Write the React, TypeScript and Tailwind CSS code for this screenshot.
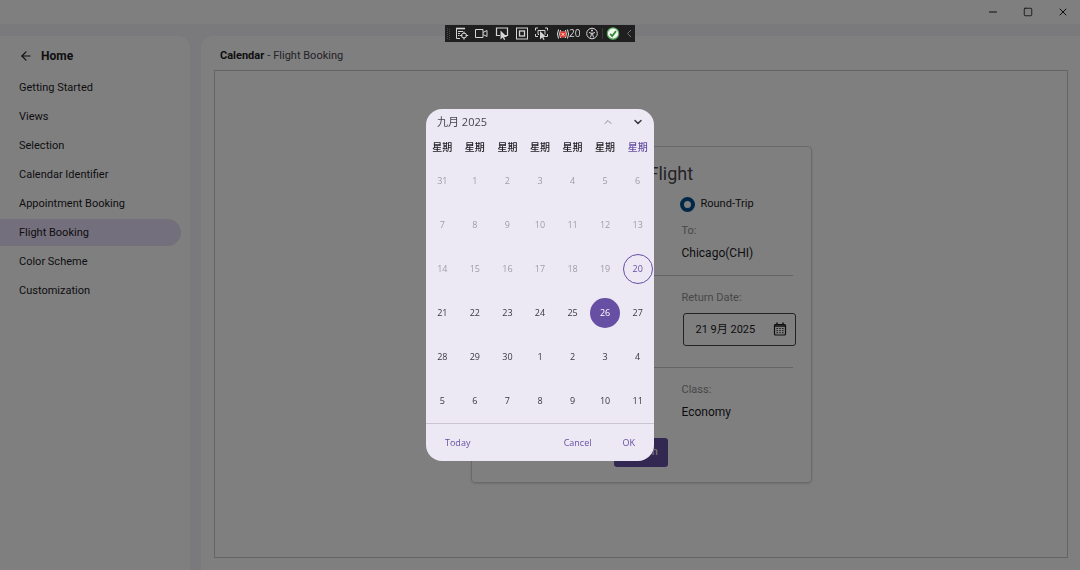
import React, { useState } from "react";
import { ArrowLeft, ChevronDown, ChevronUp, Minus, Square, X } from "lucide-react";

const MENU = [
  "Getting Started",
  "Views",
  "Selection",
  "Calendar Identifier",
  "Appointment Booking",
  "Flight Booking",
  "Color Scheme",
  "Customization",
];

const WEEKDAYS = ["星期", "星期", "星期", "星期", "星期", "星期", "星期"];

const WEEKS = [
  [31, 1, 2, 3, 4, 5, 6],
  [7, 8, 9, 10, 11, 12, 13],
  [14, 15, 16, 17, 18, 19, 20],
  [21, 22, 23, 24, 25, 26, 27],
  [28, 29, 30, 1, 2, 3, 4],
  [5, 6, 7, 8, 9, 10, 11],
];

// cell index of today, counted from the top left of the month grid
const TODAY = 20;

const TitleBar: React.FC = () => (
  <header className="flex h-6 shrink-0 items-center justify-end bg-white text-[#1c1b1f]">
    <button aria-label="Minimize" className="flex w-[35px] justify-center">
      <Minus className="h-3 w-3" strokeWidth={2} />
    </button>
    <button aria-label="Maximize" className="flex w-[35px] justify-center">
      <Square className="h-[10px] w-[10px]" strokeWidth={2} />
    </button>
    <button aria-label="Close" className="flex w-[35px] justify-center">
      <X className="h-3 w-3" strokeWidth={2} />
    </button>
  </header>
);

const Sidebar: React.FC = () => (
  <nav className="w-[190px] shrink-0 rounded-tr-xl bg-white pr-[9px]">
    <div className="flex h-[38px] items-center gap-2 pl-[19px] pt-[2px] text-[#1c1b1f]">
      <button aria-label="Back">
        <ArrowLeft className="h-[14px] w-[14px]" strokeWidth={2} />
      </button>
      <span className="text-[12px] font-bold">Home</span>
    </div>
    <ul className="flex flex-col gap-[2px]">
      {MENU.map((item) => (
        <li key={item}>
          <a
            href="#"
            className={`flex h-[27px] items-center rounded-r-full pl-[19px] pt-[2px] text-[11px] text-[#1c1b1f] ${
              item === "Flight Booking" ? "bg-[#e8def8]" : ""
            }`}
          >
            {item}
          </a>
        </li>
      ))}
    </ul>
  </nav>
);

const CalendarGlyph: React.FC = () => (
  <svg viewBox="0 0 14 14" className="h-[14px] w-[14px]" fill="none" stroke="currentColor">
    <rect x="1.5" y="2.5" width="11" height="10.5" rx="1" strokeWidth="1.2" />
    <path d="M4 .5v2M10 .5v2M1.5 4h11" strokeWidth="1.4" />
    <path
      d="M3.500 6.500h1.400M6.300 6.500h1.400M9.100 6.500h1.400M3.500 8.600h1.400M6.300 8.600h1.400M9.100 8.600h1.400M3.500 10.700h1.400M6.300 10.700h1.400M9.100 10.700h1.400"
      strokeWidth="1"
    />
  </svg>
);

const FlightCard: React.FC = () => (
  <form className="flex w-[341px] flex-col rounded-[4px] border border-[#d6d3d8] px-[15px] pb-[15px] shadow-sm">
    <h2 className="mt-[13px] text-center text-[18px] leading-[28px] text-[#49454f]">Book a Flight</h2>
    <div className="ml-auto mt-[8px] flex w-[114px] flex-col">
      <label className="ml-[-2px] flex h-[18px] items-center gap-[6px] text-[11px] text-[#1c1b1f]">
        <input
          type="radio"
          name="trip"
          defaultChecked
          className="h-[15px] w-[15px] appearance-none rounded-full border-4 border-[#004f8c]"
        />
        Round-Trip
      </label>
      <span className="mt-[8px] text-[11px] leading-[18px] text-[#8f8f8f]">To:</span>
      <span className="mt-[4px] text-[12px] leading-[18px] text-[#1c1b1f]">Chicago(CHI)</span>
    </div>
    <hr className="mx-[3px] mt-[13px] border-[#cac4d0]" />
    <div className="ml-auto mt-[13px] flex w-[114px] flex-col">
      <label htmlFor="return" className="text-[11px] leading-[18px] text-[#8f8f8f]">
        Return Date:
      </label>
      <div className="ml-px mt-[6px] flex h-[33px] items-center rounded-[3px] border border-[#49454f] pl-3 pr-2">
        <input
          id="return"
          readOnly
          value="21 9月 2025"
          className="min-w-0 flex-1 bg-transparent pt-[3px] text-[11px] text-[#1c1b1f] outline-none"
        />
        <button type="button" aria-label="Open calendar" className="text-[#1c1b1f]">
          <CalendarGlyph />
        </button>
      </div>
    </div>
    <hr className="mx-[3px] mt-[21px] border-[#cac4d0]" />
    <div className="ml-auto mt-[13px] flex w-[114px] flex-col">
      <span className="text-[11px] leading-[18px] text-[#8f8f8f]">Class:</span>
      <span className="mt-[4px] text-[12px] leading-[18px] text-[#1c1b1f]">Economy</span>
    </div>
    <button
      type="button"
      className="mx-auto mt-[17px] h-[29px] w-[54px] rounded-[3px] bg-[#6750a4] text-[11px] text-white"
    >
      Search
    </button>
  </form>
);

const DebugBar: React.FC = () => (
  <div className="fixed inset-x-0 top-[25px] flex justify-center">
    <div className="flex h-[17px] w-[190px] items-center bg-[#1f1f1f] text-[#d4d4d4]">
      <svg viewBox="0 0 112 17" className="h-[17px] w-[112px] shrink-0" fill="none" stroke="currentColor">
        {/* grip */}
        <path d="M2.5 3v12M4.5 4v12" stroke="#4a4a4a" strokeDasharray="1 1" />
        {/* live visual tree */}
        <path d="M11 3.500h9" strokeWidth="1.600" />
        <path d="M11.500 3.500v10h3.500M13 6.500h5M13 8.500h2M13 10.500h1.500" />
        <circle cx="19" cy="10.500" r="2.500" />
        <path d="M19 6.500v2.500M19 12v2.700M15 10.500h2.500M20.500 10.500h2.700" />
        {/* camera */}
        <path d="M30.500 4.500h7.500v8h-7.500zM38 7.500l4-2v6l-4-2" />
        {/* select element */}
        <path d="M55 10.500h-3.500v-7.500h11v7.500h-2.500" strokeWidth="1.200" />
        <path d="M55.500 5.500v9l2.200-2 1.300 2.500 1.300-.6-1.200-2.500h3z" fill="currentColor" stroke="none" />
        {/* layout adorners */}
        <rect x="71.500" y="3" width="11" height="11" />
        <rect x="74.500" y="6" width="5" height="5" strokeWidth="1.300" />
        {/* track focused */}
        <path d="M90.500 5.500v-2.500h2.500M100 3h2.500v2.500M90.500 9v2.500h2.500M102.500 9v2.500h-2M94 9.500h-1v-4h7v4" />
        <path d="M95 6v8.500l2.200-2 1.200 2.500 1.200-.6-1.200-2.500h2.800z" fill="currentColor" stroke="none" />
      </svg>
      <svg viewBox="0 0 12 12" className="h-3 w-3 shrink-0" fill="none" stroke="#e6e6e6" strokeWidth="1">
        <path d="M1.500 1.500Q-.5 6 1.500 10.500M3.500 2Q1.800 6 3.500 10M10.500 1.500Q12.500 6 10.500 10.500M8.500 2Q10.200 6 8.500 10" />
        <rect x="3.300" y="3.500" width="5.400" height="5.800" rx="1.500" fill="#e5352c" stroke="#f26a61" strokeWidth=".6" />
        <path d="M4.600 5l2.800 2.800M7.400 5L4.600 7.800" stroke="#fff" strokeWidth=".8" />
      </svg>
      <span className="w-[17px] shrink-0 font-['Open_Sans','Noto_Sans',sans-serif] text-[10px] leading-[17px]">20</span>
      <svg viewBox="0 0 49 17" className="h-[17px] w-[49px] shrink-0" fill="none" stroke="currentColor">
        {/* accessibility */}
        <circle cx="6" cy="8.500" r="5.300" />
        <circle cx="6" cy="5.600" r="1" fill="currentColor" stroke="none" />
        <path d="M3 7.500l2.200.7h1.600L9 7.500M5.300 8v2L4.300 12.500M6.700 8v2l1 2.500" />
        <path d="M16.500 3v11" stroke="#3a3a3a" />
        {/* hot reload ok */}
        <circle cx="27" cy="8.500" r="5.700" fill="#f1f8f1" stroke="#59a85d" strokeWidth="1.200" />
        <path d="M24.200 8.800l2 2.300 3.800-5" stroke="#388a3c" strokeWidth="1.800" />
        <path d="M45 5l-3.500 3.500L45 12" stroke="#777" />
      </svg>
    </div>
  </div>
);

const DatePickerDialog: React.FC = () => {
  const [selected, setSelected] = useState(26);

  return (
    <div
      role="dialog"
      aria-label="九月 2025"
      className="w-[228px] overflow-hidden rounded-[16px] bg-[#ece8f4] font-['Open_Sans','Noto_Sans_CJK_SC',sans-serif] text-[9px]"
    >
      <div className="flex h-[26px] items-center pl-[11px] pr-[10px] text-[#49454f]">
        <span className="flex-1 text-[11px]">九月 2025</span>
        <button aria-label="Previous month" className="mr-[18px] text-[#8d8896]">
          <ChevronUp className="h-3 w-3" strokeWidth={2} />
        </button>
        <button aria-label="Next month" className="text-[#3a3740]">
          <ChevronDown className="h-3 w-3" strokeWidth={3} />
        </button>
      </div>

      <table className="w-full table-fixed border-collapse text-center">
        <thead>
          <tr className="h-6">
            {WEEKDAYS.map((name, i) => (
              <th
                key={i}
                className={`whitespace-nowrap p-0 text-[10px] font-medium ${
                  i === 6 ? "text-[#6750a4]" : "text-[#1c1b1f]"
                }`}
              >
                {name}
              </th>
            ))}
          </tr>
        </thead>
        <tbody>
          {WEEKS.map((week, row) => (
            <tr key={row} className="h-11">
              {week.map((day, col) => {
                const cell = row * 7 + col;
                const look =
                  cell === selected
                    ? "bg-[#6750a4] text-white"
                    : cell === TODAY
                    ? "border border-[#6750a4] text-[#6750a4] font-medium"
                    : cell < TODAY
                    ? "text-[#a09ca8]"
                    : "text-[#3a3740]";
                return (
                  <td key={col} className="p-0">
                    <button
                      disabled={cell < TODAY}
                      onClick={() => setSelected(cell)}
                      className={`mx-auto flex h-[30px] w-[30px] items-center justify-center rounded-full ${look}`}
                    >
                      {day}
                    </button>
                  </td>
                );
              })}
            </tr>
          ))}
        </tbody>
      </table>

      <div className="flex h-[38px] items-center border-t border-[#cac4d0] pl-[19px] pr-[19px] text-[#6750a4]">
        <button className="mr-auto">Today</button>
        <button className="mr-[31px]">Cancel</button>
        <button>OK</button>
      </div>
    </div>
  );
};

export default function App() {
  return (
    <div className="flex min-h-screen flex-col bg-[#f4f3f7] font-[Roboto,'Noto_Sans_CJK_SC',sans-serif]">
      <TitleBar />
      <div className="flex flex-1 gap-[11px] pt-3">
        <Sidebar />
        <main className="flex flex-1 flex-col rounded-tl-xl bg-white pb-3 pl-[13px] pr-3">
          <div className="flex h-[34px] items-center gap-[3px] pl-[6px] pt-[6px] text-[11px] text-[#49454f]">
            <span className="font-bold text-[#1c1b1f]">Calendar</span>
            <span>-</span>
            <span>Flight Booking</span>
          </div>
          <section className="flex flex-1 items-center justify-center border border-[#cac4d0]">
            <FlightCard />
          </section>
        </main>
      </div>

      <div className="fixed inset-0 flex items-center justify-center bg-black/50">
        <DatePickerDialog />
      </div>
      <DebugBar />
    </div>
  );
}
